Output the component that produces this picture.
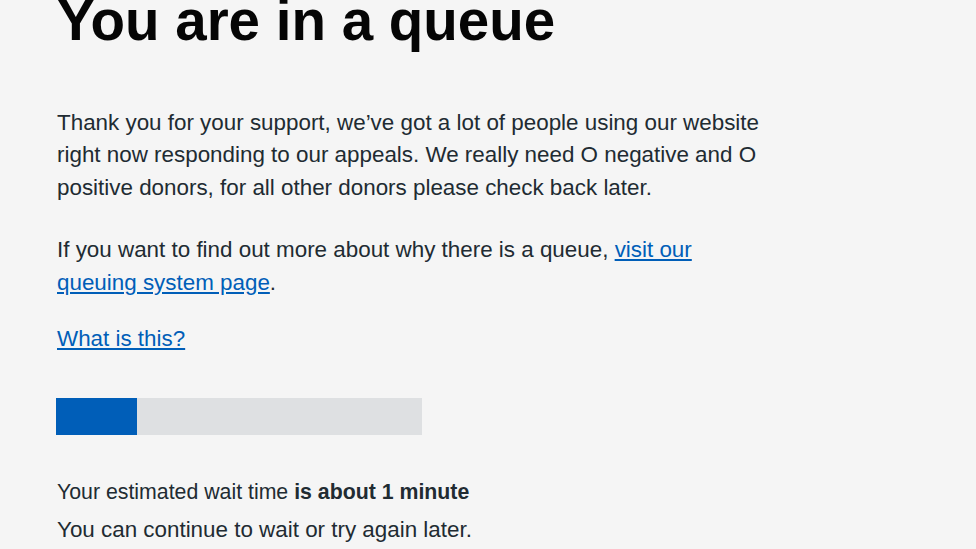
import React from 'react';

function QueueBar({ percent }) {
  return (
    <div className="w-[366px] h-[37px] bg-[#dee0e2]">
      <div className="h-full bg-[#005eb8]" style={{ width: `${percent}%` }}></div>
    </div>
  );
}

export default function App() {
  return (
    <div className="min-h-screen w-full bg-[#f5f5f5] overflow-hidden font-['Liberation_Sans',Arial,sans-serif] text-[#212b32]">
      <div className="pl-[57px]">
        <h1 className="text-[56.5px] font-bold leading-none text-[#050505] mt-[-7px]">You are in a queue</h1>

        <p className="mt-[57px] w-[740px] text-[22.4px] leading-[32.5px]">
          Thank you for your support, we’ve got a lot of people using our website right now responding to our appeals. We really need O negative and O positive donors, for all other donors please check back later.
        </p>

        <p className="mt-[29px] w-[660px] text-[22.4px] leading-[33px]">
          If you want to find out more about why there is a queue,{' '}
          <a href="#" className="text-[#005eb8] underline underline-offset-2">visit our queuing system page</a>.
        </p>

        <p className="mt-[23px] text-[22.4px] leading-[33px]">
          <a href="#" className="text-[#005eb8] underline underline-offset-2">What is this?</a>
        </p>

        <div className="mt-[43px] -ml-px">
          <QueueBar percent={22} />
        </div>

        <p className="mt-[38px] text-[21.3px] leading-[38px]">
          Your estimated wait time <span className="font-bold">is about 1 minute</span>
        </p>
        <p className="text-[22.4px] leading-[38px]">You can continue to wait or try again later.</p>
      </div>
    </div>
  );
}
